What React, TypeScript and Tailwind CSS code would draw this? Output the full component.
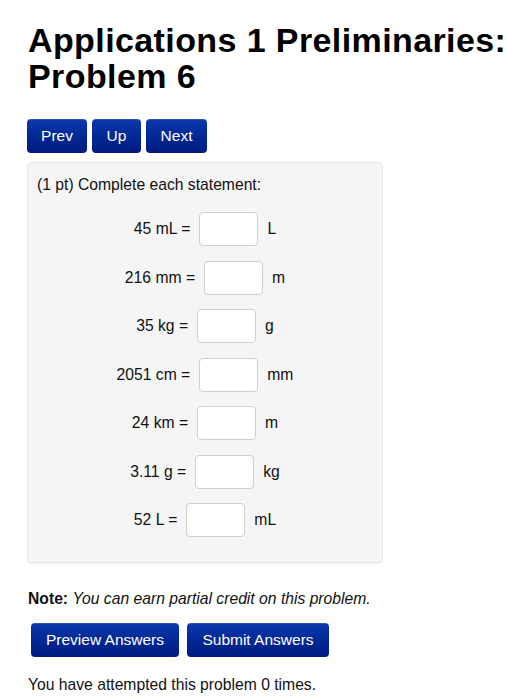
import React from "react";

const rows = [
  { left: "45 mL =", unit: "L" },
  { left: "216 mm =", unit: "m" },
  { left: "35 kg =", unit: "g" },
  { left: "2051 cm =", unit: "mm" },
  { left: "24 km =", unit: "m" },
  { left: "3.11 g =", unit: "kg" },
  { left: "52 L =", unit: "mL" },
];

const navBtn =
  "h-[34px] rounded-[4px] bg-gradient-to-b from-[#0b37ad] to-[#001a80] text-white text-[15.5px] flex items-center justify-center shadow-[inset_0_1px_0_rgba(255,255,255,0.15)]";

export default function App() {
  return (
    <div className="min-h-screen bg-white text-[#111] font-['Liberation_Sans',Arial,sans-serif] pl-[28px] pr-0 pt-[22px]">
      {/* Title */}
      <h1 className="text-[34px] leading-[36px] tracking-[0.4px] font-bold text-black whitespace-nowrap">
        Applications 1 Preliminaries:
        <br />
        Problem 6
      </h1>

      {/* Nav */}
      <div className="flex gap-[5px] mt-[25px] -ml-px">
        <button className={`${navBtn} w-[60px]`}>Prev</button>
        <button className={`${navBtn} w-[49px]`}>Up</button>
        <button className={`${navBtn} w-[61px]`}>Next</button>
      </div>

      {/* Problem panel */}
      <div className="mt-[9px] -ml-px w-[356px] h-[401px] bg-[#f5f5f5] border border-[#e6e6e6] rounded-[4px] shadow-[0_1px_1px_rgba(0,0,0,0.05)] px-[9px] pt-[12px]">
        <p className="text-[15.7px] leading-[20px]">(1 pt) Complete each statement:</p>
        <div className="flex flex-col gap-[14.5px] mt-[17px]">
          {rows.map((r) => (
            <div key={r.left} className="flex items-center justify-center text-[15.7px]">
              <span>{r.left}</span>
              <span className="ml-[9px] w-[59px] h-[34px] bg-white border border-[#cfcfcf] rounded-[4px]" />
              <span className="ml-[9px]">{r.unit}</span>
            </div>
          ))}
        </div>
      </div>

      {/* Note */}
      <p className="mt-[26px] text-[15.7px] leading-[20px]">
        <b>Note:</b> <i>You can earn partial credit on this problem.</i>
      </p>

      <div className="flex gap-[8px] mt-[14px] ml-[3px]">
        <button className={`${navBtn} w-[148px]`}>Preview Answers</button>
        <button className={`${navBtn} w-[142px]`}>Submit Answers</button>
      </div>

      <p className="mt-[18px] text-[15.7px] leading-[20px]">You have attempted this problem 0 times.</p>
    </div>
  );
}
